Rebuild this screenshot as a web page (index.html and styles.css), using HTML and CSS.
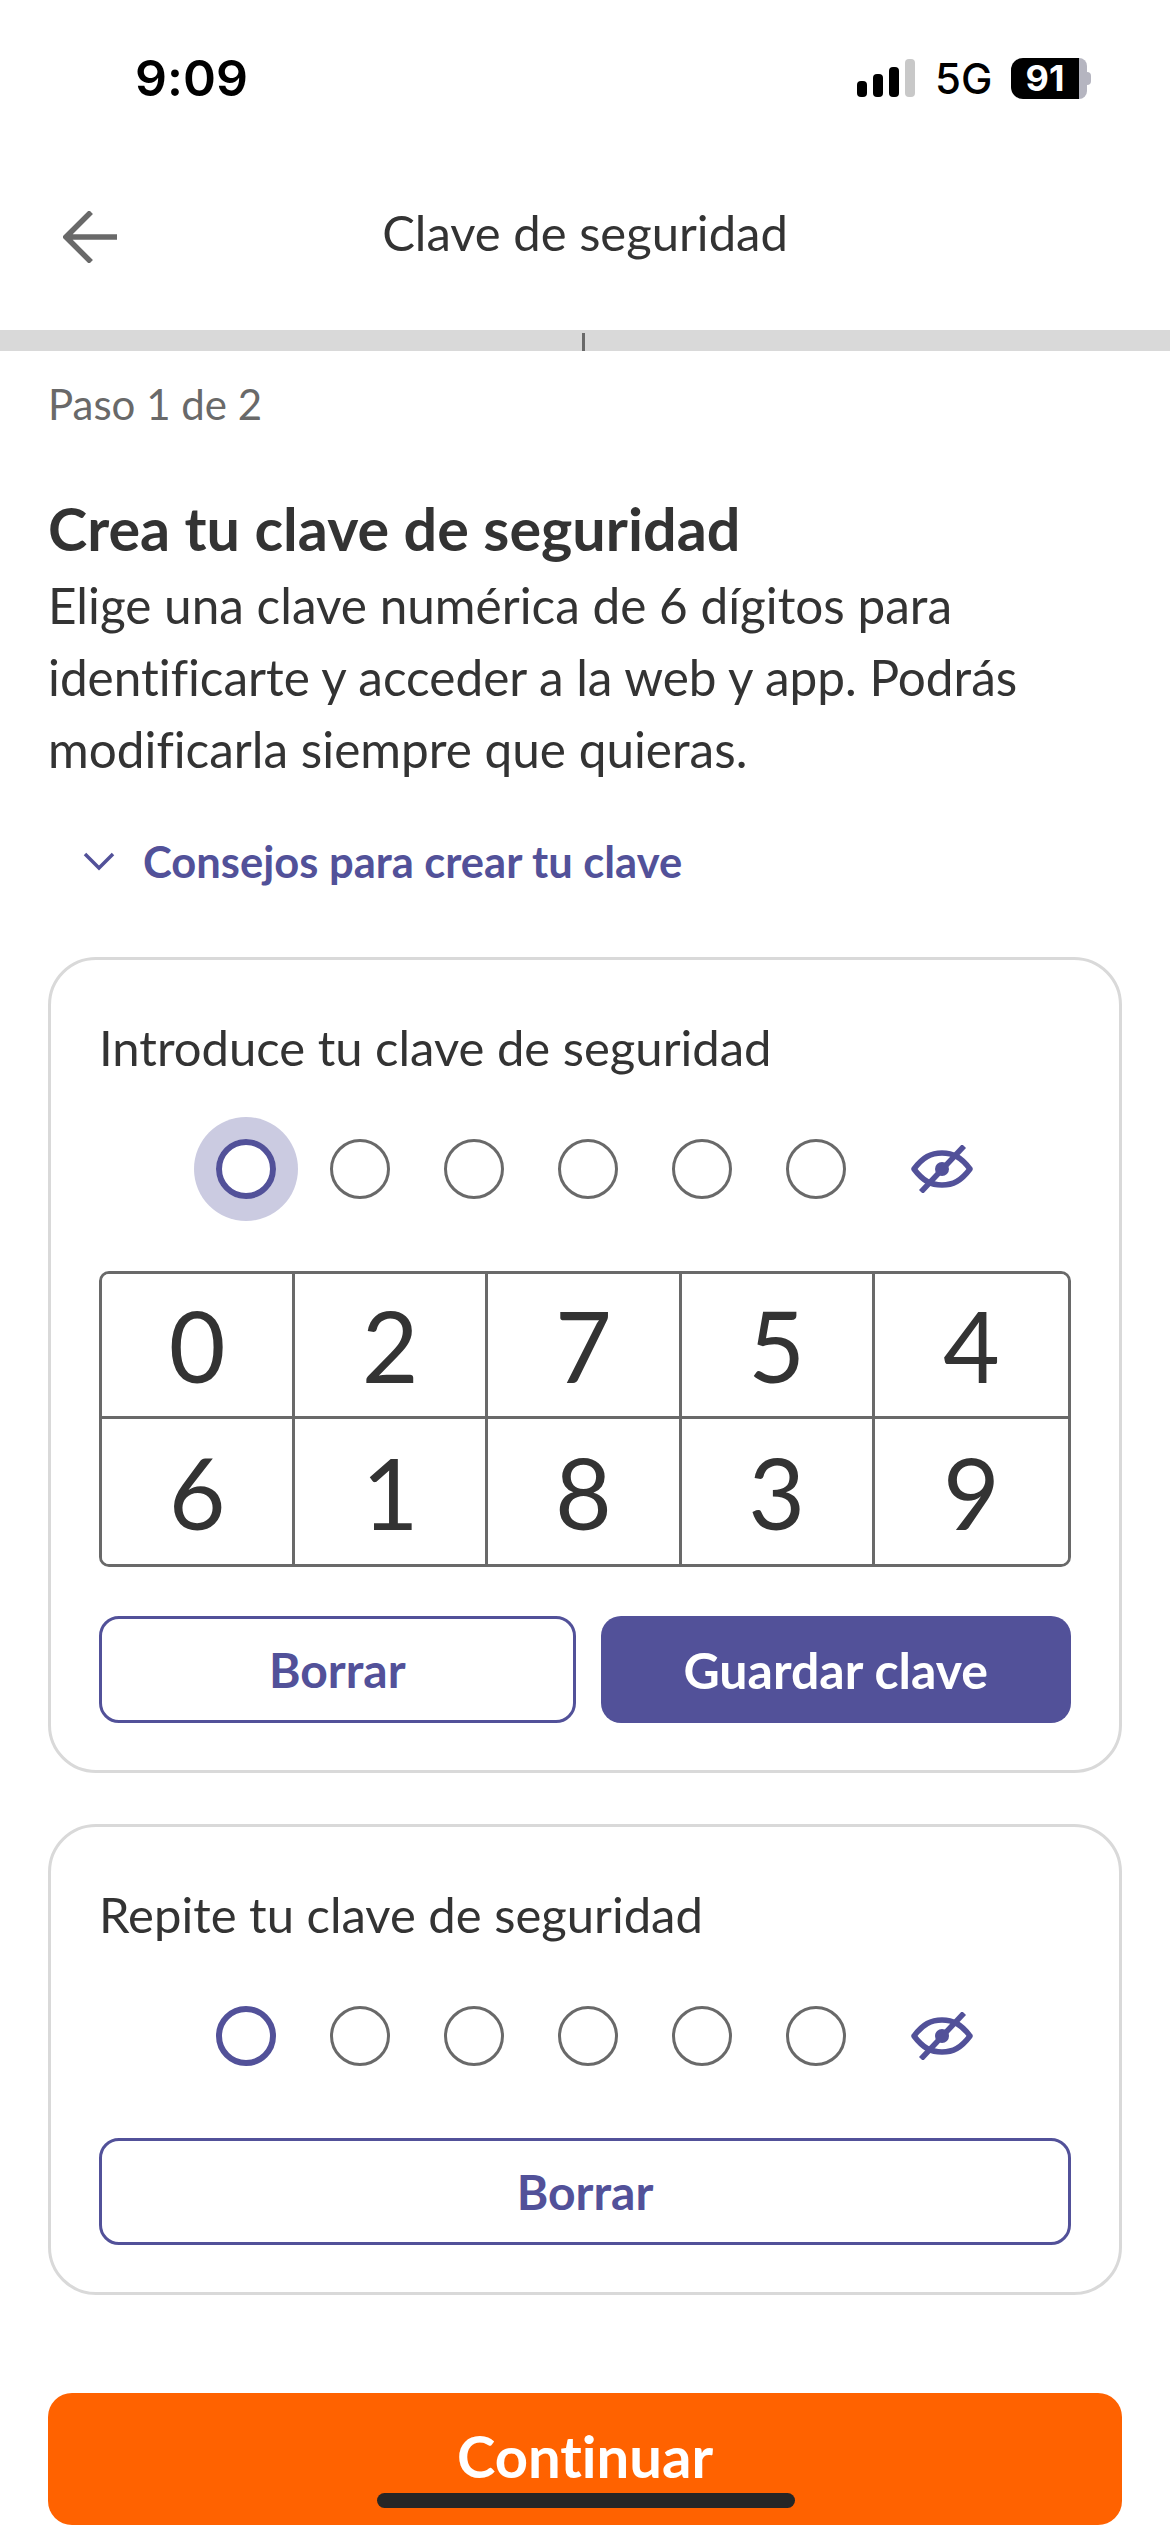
FILE: index.html
```html
<!DOCTYPE html>
<html lang="es">
<head>
    <meta charset="UTF-8">
    <meta name="viewport" content="width=device-width, initial-scale=1">
    <title>Clave de seguridad</title>
    <link rel="stylesheet" href="styles.css">
</head>
<body>
    <div class="statusBar">
        <span class="time">9:09</span>
        <div class="statusRight">
            <svg class="signal" width="58" height="38" viewBox="0 0 58 38">
                <rect x="0" y="22" width="10" height="16" rx="4" fill="#000"/>
                <rect x="16" y="15" width="10" height="23" rx="4" fill="#000"/>
                <rect x="32" y="8" width="10" height="30" rx="4" fill="#000"/>
                <rect x="48" y="0" width="10" height="38" rx="4" fill="#c8c8c8"/>
            </svg>
            <span class="network">5G</span>
            <div class="battery">
                <span class="batteryLevel">91</span>
                <span class="batteryEnd"></span>
                <span class="batteryTip"></span>
            </div>
        </div>
    </div>

    <div class="navBar">
        <svg class="backIcon" width="56" height="52" viewBox="0 0 56 52">
            <path d="M28 1 L3 26 L28 51 M3 26 H54" fill="none" stroke="#696969" stroke-width="5.5"/>
        </svg>
        <span class="navTitle">Clave de seguridad</span>
    </div>

    <div class="progress"><span class="progressTick"></span></div>

    <div class="content">
        <p class="step">Paso 1 de 2</p>
        <h1 class="heading">Crea tu clave de seguridad</h1>
        <p class="intro">Elige una clave numérica de 6 dígitos para identificarte y acceder a la web y app. Podrás modificarla siempre que quieras.</p>

        <div class="tips">
            <svg class="tipsIcon" width="32" height="20" viewBox="0 0 32 20">
                <path d="M2 3 L16 17 L30 3" fill="none" stroke="#525199" stroke-width="3.5"/>
            </svg>
            <span>Consejos para crear tu clave</span>
        </div>

        <div class="card">
            <p class="cardLabel">Introduce tu clave de seguridad</p>
            <div class="pinRow">
                <span class="dotWrap"><span class="dot dotActive dotFocus"></span></span>
                <span class="dotWrap"><span class="dot"></span></span>
                <span class="dotWrap"><span class="dot"></span></span>
                <span class="dotWrap"><span class="dot"></span></span>
                <span class="dotWrap"><span class="dot"></span></span>
                <span class="dotWrap"><span class="dot"></span></span>
                <svg class="eyeIcon" width="62" height="48" viewBox="0 0 62 48">
                    <path d="M3 24 C12 12 20 8 31 8 C42 8 50 12 59 24 C50 36 42 40 31 40 C20 40 12 36 3 24 Z" fill="none" stroke="#525199" stroke-width="5.5" stroke-linejoin="round"/>
                    <circle cx="31" cy="24" r="7" fill="#525199"/>
                    <path d="M53 1 L10 47" stroke="#525199" stroke-width="5.5"/>
                </svg>
            </div>
            <div class="keypad">
                <button class="key">0</button>
                <button class="key">2</button>
                <button class="key">7</button>
                <button class="key">5</button>
                <button class="key">4</button>
                <button class="key">6</button>
                <button class="key">1</button>
                <button class="key">8</button>
                <button class="key">3</button>
                <button class="key">9</button>
            </div>
            <div class="actions">
                <button class="btn btnOutline">Borrar</button>
                <button class="btn btnFilled">Guardar clave</button>
            </div>
        </div>

        <div class="card cardSecond">
            <p class="cardLabel">Repite tu clave de seguridad</p>
            <div class="pinRow">
                <span class="dotWrap"><span class="dot dotActive"></span></span>
                <span class="dotWrap"><span class="dot"></span></span>
                <span class="dotWrap"><span class="dot"></span></span>
                <span class="dotWrap"><span class="dot"></span></span>
                <span class="dotWrap"><span class="dot"></span></span>
                <span class="dotWrap"><span class="dot"></span></span>
                <svg class="eyeIcon" width="62" height="48" viewBox="0 0 62 48">
                    <path d="M3 24 C12 12 20 8 31 8 C42 8 50 12 59 24 C50 36 42 40 31 40 C20 40 12 36 3 24 Z" fill="none" stroke="#525199" stroke-width="5.5" stroke-linejoin="round"/>
                    <circle cx="31" cy="24" r="7" fill="#525199"/>
                    <path d="M53 1 L10 47" stroke="#525199" stroke-width="5.5"/>
                </svg>
            </div>
            <div class="actions">
                <button class="btn btnOutline">Borrar</button>
            </div>
        </div>

        <button class="continueBtn">Continuar</button>
    </div>

    <div class="homeBar"></div>
</body>
</html>
```

FILE: styles.css
```css
html, body {
    margin: 0;
    padding: 0;
}

body {
    position: relative;
    width: 1170px;
    height: 2532px;
    overflow: hidden;
    background-color: #fff;
    color: #333;
    font-family: Lato, "Noto Sans", sans-serif;
    font-variant-ligatures: none;
}

p, h1 {
    margin: 0;
}

button {
    font-family: inherit;
    font-variant-ligatures: none;
    cursor: pointer;
}

/* status bar */
.statusBar {
    display: flex;
    justify-content: space-between;
    align-items: center;
    height: 156px;
    padding: 0 79px 0 135px;
    box-sizing: border-box;
}

.time {
    font-family: Inter, sans-serif;
    font-size: 50px;
    font-weight: 600;
    color: #000;
}

.statusRight {
    display: flex;
    align-items: center;
}

.signal {
    margin-right: 20px;
}

.network {
    width: 76px;
    font-family: Inter, sans-serif;
    font-size: 42px;
    font-weight: 500;
    color: #000;
}

.battery {
    display: flex;
    align-items: center;
}

.batteryLevel {
    width: 68px;
    height: 41px;
    line-height: 41px;
    text-align: center;
    border-radius: 12px 0 0 12px;
    background-color: #000;
    color: #fff;
    font-family: Inter, sans-serif;
    font-size: 36px;
    font-weight: 700;
}

.batteryEnd {
    width: 8px;
    height: 41px;
    border-radius: 0 10px 10px 0;
    background-color: #b5b5c0;
}

.batteryTip {
    width: 4px;
    height: 13px;
    border-radius: 0 6px 6px 0;
    background-color: #b5b5c0;
}

/* nav */
.navBar {
    position: relative;
    display: flex;
    justify-content: center;
    align-items: center;
    height: 174px;
    padding-bottom: 22px;
    box-sizing: border-box;
}

.backIcon {
    position: absolute;
    left: 63px;
    top: 55px;
}

.navTitle {
    font-size: 49px;
}

.progress {
    position: relative;
    height: 21px;
    background-color: #d9d9d9;
}

.progressTick {
    position: absolute;
    left: 582px;
    top: 3px;
    width: 3px;
    height: 18px;
    background-color: #696969;
}

.content {
    padding: 28px 48px 0;
}

.step {
    font-size: 42px;
    line-height: 50px;
    color: #696969;
}

.heading {
    margin-top: 69px;
    font-size: 59.3px;
    line-height: 60px;
    font-weight: 700;
}

.intro {
    margin-top: 11px;
    font-size: 49.5px;
    line-height: 72px;
}

.tips {
    display: flex;
    align-items: center;
    gap: 28px;
    margin-top: 48px;
    padding-left: 35px;
    font-size: 43.5px;
    line-height: 56px;
    font-weight: 700;
    color: #525199;
}

/* cards */
.card {
    margin-top: 68px;
    padding: 57px 48px 47px;
    border: 3px solid #d9d9d9;
    border-radius: 48px;
}

.cardSecond {
    margin-top: 51px;
}

.cardLabel {
    font-size: 49px;
    line-height: 60px;
}

.pinRow {
    display: flex;
    align-items: center;
    height: 104px;
    margin-top: 40px;
    padding-left: 90px;
}

.dotWrap {
    display: flex;
    justify-content: center;
    width: 114px;
}

.dot {
    width: 60px;
    height: 60px;
    box-sizing: border-box;
    border: 3px solid #696969;
    border-radius: 50%;
}

.dotActive {
    border: 6px solid #525199;
}

.dotFocus {
    box-shadow: 0 0 0 22px #cbcbe1;
}

.eyeIcon {
    margin-left: 38px;
}

.keypad {
    display: grid;
    grid-template-columns: repeat(5, 1fr);
    grid-auto-rows: 145px;
    margin-top: 50px;
    border: 3px solid #696969;
    border-radius: 10px;
    overflow: hidden;
}

.key {
    padding: 0;
    border: 0;
    border-right: 3px solid #696969;
    border-bottom: 3px solid #696969;
    background-color: #fff;
    color: #333;
    font-size: 98px;
    font-weight: 400;
}

.key:nth-child(5n) {
    border-right: 0;
}

.key:nth-child(n+6) {
    border-bottom: 0;
}

.actions {
    display: flex;
    gap: 25px;
    margin-top: 49px;
}

.cardSecond .actions {
    margin-top: 50px;
}

.btn {
    flex: 1;
    height: 107px;
    border-radius: 20px;
    font-size: 48px;
    font-weight: 700;
}

.btnOutline {
    border: 3px solid #525199;
    background-color: #fff;
    color: #525199;
}

.btnFilled {
    border: 0;
    background-color: #525199;
    color: #fff;
    font-size: 50px;
}

.continueBtn {
    display: block;
    width: 100%;
    height: 132px;
    margin-top: 98px;
    padding: 0 0 8px;
    border: 0;
    border-radius: 24px;
    background-color: #ff6200;
    color: #fff;
    font-size: 58px;
    font-weight: 700;
}

/* ios home indicator, sits on top of the button */
.homeBar {
    position: absolute;
    left: 377px;
    top: 2493px;
    width: 418px;
    height: 15px;
    border-radius: 8px;
    background-color: #262626;
}
```
